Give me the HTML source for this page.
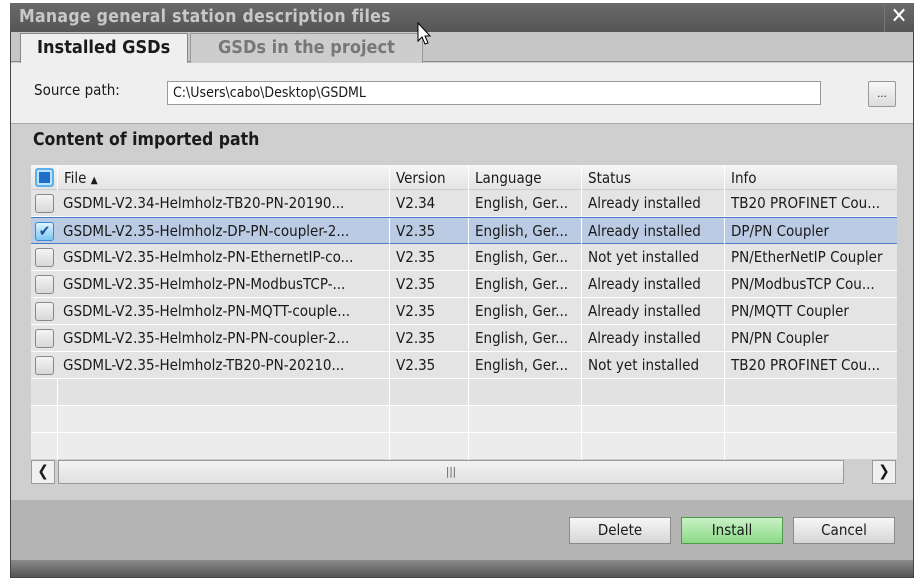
<!DOCTYPE html>
<html><head><style>
*{margin:0;padding:0;box-sizing:border-box}
body{width:917px;height:588px;background:#fff;font-family:"DejaVu Sans Condensed","Liberation Sans",sans-serif;position:relative;overflow:hidden;color:#1a1a1a}
.a{position:absolute}
.win{left:10px;top:3px;width:904px;height:575px;background:#cfcfcf;border:1px solid #444}
.title{left:10px;top:3px;width:904px;height:29px;background:linear-gradient(#6a6a6a,#555);color:#c8c8c8;font-weight:bold;font-size:17.5px;padding:4px 0 0 9px;letter-spacing:0.3px}
.close{left:884px;top:4px;width:29px;height:28px;border-left:1px solid #777;color:#fff;font-size:22px;text-align:center;line-height:26px}
.tabs{left:11px;top:32px;width:902px;height:30px;background:#c6c6c6;border-bottom:1px solid #888}
.tab{top:33px;height:30px;font-size:18px;font-weight:bold;padding:3px 0 0 16px}
.src{left:11px;top:63px;width:902px;height:61px;background:#efefef;border-bottom:1px solid #aaa}
.row{left:31px;width:866px;height:27px;font-size:15px}
.c{position:absolute;top:0;height:27px;line-height:26px;padding-left:6px;border-right:1px solid #fff;white-space:nowrap;overflow:hidden}
.cb{position:absolute;left:4px;top:4px;width:19px;height:19px;border:1px solid #888;border-radius:3px;background:linear-gradient(#f4f4f4,#d8d8d8)}
.btn{top:517px;width:102px;height:27px;border:1px solid #888;background:linear-gradient(#f6f6f6,#d6d6d6);font-size:15px;text-align:center;line-height:25px}
</style></head><body>
<div class="a win"></div>
<div class="a title">Manage general station description files</div>
<div class="a close">✕</div>
<div class="a tabs"></div>
<div class="a tab" style="left:20px;width:168px;background:#efefef;border:1px solid #888;border-bottom:none;height:31px">Installed GSDs</div>
<div class="a tab" style="left:190px;width:233px;background:#cdcdcd;border:1px solid #999;border-bottom:none;color:#777;padding-left:27px">GSDs in the project</div>
<svg class="a" style="left:417px;top:22px" width="16" height="24" viewBox="0 0 16 24"><path d="M1 1V19L5 15L8 22L11 21L8 14H13Z" fill="#fff" stroke="#000" stroke-width="1"/></svg>
<div class="a src"></div>
<div class="a" style="left:34px;top:81px;font-size:15px">Source path:</div>
<div class="a" style="left:167px;top:81px;width:654px;height:24px;background:#fff;border:1px solid #999;font-size:14px;padding:3px 0 0 5px">C:\Users\cabo\Desktop\GSDML</div>
<div class="a" style="left:868px;top:81px;width:28px;height:26px;border:1px solid #999;border-radius:2px;background:linear-gradient(#f8f8f8,#dcdcdc);font-size:11px;text-align:center;line-height:24px">...</div>
<div class="a" style="left:33px;top:130px;font-size:17.5px;font-weight:bold">Content of imported path</div>
<div class="a" style="left:31px;top:165px;width:866px;height:294px;background:#e6e6e6"></div>
<div class="a row" style="top:165px;height:25px;background:linear-gradient(#f6f6f6,#e4e4e4);border-bottom:1px solid #ccc">
<div class="cb" style="top:3px;background:#1d6fc9;border:2px solid #5ab0ea;border-radius:3px;box-shadow:inset 0 0 0 2px #bde3ff"></div>
<div class="c" style="left:26px;width:333px;border-left:1px solid #fff">File <span style="font-size:10px">▲</span></div>
<div class="c" style="left:359px;width:79px">Version</div>
<div class="c" style="left:438px;width:113px">Language</div>
<div class="c" style="left:551px;width:143px">Status</div>
<div class="c" style="left:694px;width:172px;border:none">Info</div>
</div>
<div class="a row" style="top:190px;background:#e4e4e4;border-bottom:1px solid #fff"><div class="cb"></div><div class="c" style="left:26px;width:333px">GSDML-V2.34-Helmholz-TB20-PN-20190...</div><div class="c" style="left:359px;width:79px">V2.34</div><div class="c" style="left:438px;width:113px">English, Ger...</div><div class="c" style="left:551px;width:143px">Already installed</div><div class="c" style="left:694px;width:172px;border:none">TB20 PROFINET Cou...</div></div>
<div class="a row" style="top:217px;background:#bccbe4;border-top:1px solid #4a7cc4;border-bottom:1px solid #4a7cc4"><div class="cb" style="background:linear-gradient(#dff3ff,#7cc7f0);border-color:#3a8ad0;color:#1a4f9a;font-size:15px;line-height:16px;text-align:center;font-weight:bold">✔</div><div class="c" style="left:26px;width:333px">GSDML-V2.35-Helmholz-DP-PN-coupler-2...</div><div class="c" style="left:359px;width:79px">V2.35</div><div class="c" style="left:438px;width:113px">English, Ger...</div><div class="c" style="left:551px;width:143px">Already installed</div><div class="c" style="left:694px;width:172px;border:none">DP/PN Coupler</div></div>
<div class="a row" style="top:244px;background:#e4e4e4;border-bottom:1px solid #fff"><div class="cb"></div><div class="c" style="left:26px;width:333px">GSDML-V2.35-Helmholz-PN-EthernetIP-co...</div><div class="c" style="left:359px;width:79px">V2.35</div><div class="c" style="left:438px;width:113px">English, Ger...</div><div class="c" style="left:551px;width:143px">Not yet installed</div><div class="c" style="left:694px;width:172px;border:none">PN/EtherNetIP Coupler</div></div>
<div class="a row" style="top:271px;background:#e4e4e4;border-bottom:1px solid #fff"><div class="cb"></div><div class="c" style="left:26px;width:333px">GSDML-V2.35-Helmholz-PN-ModbusTCP-...</div><div class="c" style="left:359px;width:79px">V2.35</div><div class="c" style="left:438px;width:113px">English, Ger...</div><div class="c" style="left:551px;width:143px">Already installed</div><div class="c" style="left:694px;width:172px;border:none">PN/ModbusTCP Cou...</div></div>
<div class="a row" style="top:298px;background:#e4e4e4;border-bottom:1px solid #fff"><div class="cb"></div><div class="c" style="left:26px;width:333px">GSDML-V2.35-Helmholz-PN-MQTT-couple...</div><div class="c" style="left:359px;width:79px">V2.35</div><div class="c" style="left:438px;width:113px">English, Ger...</div><div class="c" style="left:551px;width:143px">Already installed</div><div class="c" style="left:694px;width:172px;border:none">PN/MQTT Coupler</div></div>
<div class="a row" style="top:325px;background:#e4e4e4;border-bottom:1px solid #fff"><div class="cb"></div><div class="c" style="left:26px;width:333px">GSDML-V2.35-Helmholz-PN-PN-coupler-2...</div><div class="c" style="left:359px;width:79px">V2.35</div><div class="c" style="left:438px;width:113px">English, Ger...</div><div class="c" style="left:551px;width:143px">Already installed</div><div class="c" style="left:694px;width:172px;border:none">PN/PN Coupler</div></div>
<div class="a row" style="top:352px;background:#e4e4e4;border-bottom:1px solid #fff"><div class="cb"></div><div class="c" style="left:26px;width:333px">GSDML-V2.35-Helmholz-TB20-PN-20210...</div><div class="c" style="left:359px;width:79px">V2.35</div><div class="c" style="left:438px;width:113px">English, Ger...</div><div class="c" style="left:551px;width:143px">Not yet installed</div><div class="c" style="left:694px;width:172px;border:none">TB20 PROFINET Cou...</div></div>
<div class="a row" style="top:379px;background:#e2e2e2;border-bottom:1px solid #fff"><div class="c" style="left:26px;width:333px;border-left:1px solid #fff"></div><div class="c" style="left:359px;width:79px"></div><div class="c" style="left:438px;width:113px"></div><div class="c" style="left:551px;width:143px"></div></div>
<div class="a row" style="top:406px;background:#ececec;border-bottom:1px solid #fff"><div class="c" style="left:26px;width:333px;border-left:1px solid #fff"></div><div class="c" style="left:359px;width:79px"></div><div class="c" style="left:438px;width:113px"></div><div class="c" style="left:551px;width:143px"></div></div>
<div class="a row" style="top:433px;height:26px;background:#ececec"><div class="c" style="left:26px;width:333px;border-left:1px solid #fff"></div><div class="c" style="left:359px;width:79px"></div><div class="c" style="left:438px;width:113px"></div><div class="c" style="left:551px;width:143px"></div></div>
<div class="a" style="left:31px;top:460px;width:24px;height:24px;border:1px solid #999;background:#f0f0f0;text-align:center;font-size:15px;line-height:21px">❮</div>
<div class="a" style="left:58px;top:460px;width:786px;height:24px;border:1px solid #999;background:linear-gradient(#f3f3f3,#e0e0e0);text-align:center;font-size:11px;line-height:22px;color:#555">|||</div>
<div class="a" style="left:872px;top:460px;width:24px;height:24px;border:1px solid #999;background:#f0f0f0;text-align:center;font-size:15px;line-height:21px">❯</div>
<div class="a" style="left:11px;top:500px;width:902px;height:60px;background:#b4b4b4"></div>
<div class="a" style="left:11px;top:560px;width:902px;height:17px;background:linear-gradient(#8a8a8a,#555)"></div>
<div class="a btn" style="left:569px">Delete</div>
<div class="a btn" style="left:681px;background:linear-gradient(#c9f2c6,#8ad985);border-color:#4f9a4a">Install</div>
<div class="a btn" style="left:793px">Cancel</div>
</body></html>
